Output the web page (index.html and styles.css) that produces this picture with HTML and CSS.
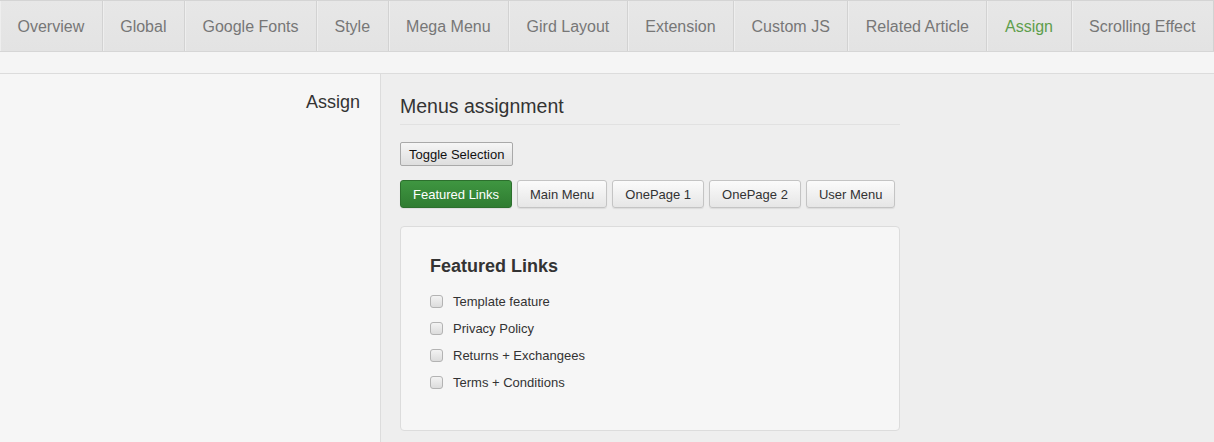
FILE: index.html
```html
<!DOCTYPE html>
<html>
<head>
<meta charset="utf-8">
<link rel="stylesheet" href="styles.css">
</head>
<body>
<nav class="tabs">
  <a class="tab">Overview</a>
  <a class="tab">Global</a>
  <a class="tab">Google Fonts</a>
  <a class="tab">Style</a>
  <a class="tab">Mega Menu</a>
  <a class="tab">Gird Layout</a>
  <a class="tab">Extension</a>
  <a class="tab">Custom JS</a>
  <a class="tab">Related Article</a>
  <a class="tab active">Assign</a>
  <a class="tab">Scrolling Effect</a>
</nav>
<div class="subbar"></div>
<main class="main">
  <div class="side">
    <div class="side-label">Assign</div>
  </div>
  <div class="content">
    <h2 class="title">Menus assignment</h2>
    <button class="toggle">Toggle Selection</button>
    <div class="menu-buttons">
      <button class="mbtn active">Featured Links</button>
      <button class="mbtn">Main Menu</button>
      <button class="mbtn">OnePage 1</button>
      <button class="mbtn">OnePage 2</button>
      <button class="mbtn">User Menu</button>
    </div>
    <div class="panel">
      <h3 class="panel-title">Featured Links</h3>
      <label class="item"><input type="checkbox" class="cb"><span>Template feature</span></label>
      <label class="item"><input type="checkbox" class="cb"><span>Privacy Policy</span></label>
      <label class="item"><input type="checkbox" class="cb"><span>Returns + Exchangees</span></label>
      <label class="item"><input type="checkbox" class="cb"><span>Terms + Conditions</span></label>
    </div>
  </div>
</main>
</body>
</html>
```

FILE: styles.css
```css
* { box-sizing: border-box; }
html, body { margin: 0; padding: 0; }
body {
  background: #f5f5f5;
  font-family: "Liberation Sans", Arial, sans-serif;
  color: #333;
  width: 1214px;
  height: 442px;
  overflow: hidden;
}
.tabs {
  display: flex;
  height: 52px;
  border-top: 1px solid #d4d4d4;
  border-bottom: 1px solid #d6d6d6;
  background: #e5e5e5;
  width: 1214px;
  box-shadow: inset 0 1px 0 #c9c9c9;
}
.tab {
  display: flex;
  align-items: center;
  padding: 2px 17.5px 0;
  font-size: 16px;
  color: #777;
  background: linear-gradient(#e7e7e7, #e3e3e3);
  border-right: 1px solid #d2d2d2;
  box-shadow: inset 1px 0 0 #eeeeee;
  white-space: nowrap;
}
.tab.active { color: #5e9e4c; }
.subbar {
  height: 22px;
  background: #f5f5f5;
  border-bottom: 1px solid #dcdcdc;
}
.main {
  display: flex;
  height: 368px;
}
.side {
  width: 381px;
  background: #f6f6f6;
  border-right: 1px solid #dcdcdc;
  padding: 17px 20px 0 0;
}
.side-label {
  text-align: right;
  font-size: 18px;
  line-height: 22px;
  color: #333;
}
.content {
  flex: 1;
  background: #eeeeee;
  padding: 21px 0 0 19px;
  display: flex;
  flex-direction: column;
  align-items: flex-start;
}
.title {
  margin: 0;
  width: 500px;
  font-size: 19.5px;
  font-weight: normal;
  line-height: 22px;
  padding-bottom: 7px;
  border-bottom: 1px solid #e1e1e1;
  color: #333;
}
.toggle {
  margin-top: 17px;
  height: 24px;
  padding: 0 8px;
  font-family: "Liberation Sans", Arial, sans-serif;
  font-size: 13px;
  color: #111;
  background: linear-gradient(#f6f6f6, #dedede);
  border: 1px solid #a9a9a9;
  border-radius: 2px;
}
.menu-buttons {
  display: flex;
  gap: 5px;
  margin-top: 14px;
}
.mbtn {
  height: 28px;
  padding: 0 12px;
  font-family: "Liberation Sans", Arial, sans-serif;
  font-size: 13px;
  color: #333;
  background: linear-gradient(#fbfbfb, #e6e6e6);
  border: 1px solid #c4c4c4;
  border-radius: 3px;
  box-shadow: 0 1px 1px rgba(0,0,0,0.08);
}
.mbtn.active {
  color: #fff;
  background: linear-gradient(#3f9641, #2f7c31);
  border-color: #2c6f2d;
}
.panel {
  margin-top: 18px;
  width: 500px;
  height: 205px;
  background: #f6f6f6;
  border: 1px solid #dcdcdc;
  border-radius: 4px;
  padding: 28px 29px 0;
  display: flex;
  flex-direction: column;
}
.panel-title {
  margin: 0 0 11px;
  font-size: 18px;
  font-weight: bold;
  line-height: 22px;
  color: #333;
}
.item {
  display: flex;
  align-items: center;
  height: 27px;
  font-size: 13px;
  color: #333;
}
.cb {
  appearance: none;
  -webkit-appearance: none;
  width: 13px;
  height: 13px;
  margin: -1px 10px 0 0;
  border: 1px solid #b3b3b3;
  border-radius: 3px;
  background: linear-gradient(#f3f3f3, #dcdcdc);
}
```
